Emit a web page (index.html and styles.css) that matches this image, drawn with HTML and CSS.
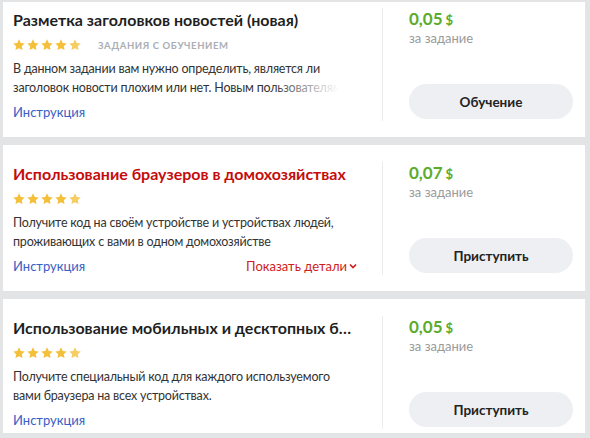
FILE: index.html
```html
<!DOCTYPE html>
<html lang="ru">
<head>
<meta charset="utf-8">
<link rel="stylesheet" href="styles.css">
</head>
<body>
<div class="frame">
  <div class="viewport">
    <div class="list">
      <div class="card">
        <div class="main">
          <div class="title">Разметка заголовков новостей (новая)</div>
          <div class="meta">
            <div class="stars">
              <svg viewBox="0 0 12 12"><path d="M6 .3l1.75 3.6 3.95.5-2.9 2.75.75 3.95L6 9.2l-3.55 1.9.75-3.95L.3 4.4l3.950-.5z"/></svg>
              <svg viewBox="0 0 12 12"><path d="M6 .3l1.75 3.6 3.95.5-2.9 2.75.75 3.95L6 9.2l-3.55 1.9.75-3.95L.3 4.4l3.95-.5z"/></svg>
              <svg viewBox="0 0 12 12"><path d="M6 .3l1.75 3.6 3.95.5-2.9 2.75.75 3.95L6 9.2l-3.55 1.9.75-3.95L.3 4.4l3.95-.5z"/></svg>
              <svg viewBox="0 0 12 12"><path d="M6 .3l1.75 3.6 3.95.5-2.9 2.75.75 3.95L6 9.2l-3.55 1.9.75-3.95L.3 4.4l3.95-.5z"/></svg>
              <svg viewBox="0 0 12 12" class="part"><path d="M6 .3l1.75 3.6 3.95.5-2.9 2.75.75 3.95L6 9.2l-3.55 1.9.75-3.95L.3 4.4l3.95-.5z"/></svg>
            </div>
            <span class="tag">Задания с обучением</span>
          </div>
          <div class="desc fade">В данном задании вам нужно определить, является ли заголовок новости плохим или нет. Новым пользователям предлагается пройти обучение.</div>
          <div class="links"><a class="link">Инструкция</a></div>
        </div>
        <div class="side">
          <div class="price">0,05<span class="cur">$</span></div>
          <div class="per">за задание</div>
          <button class="btn">Обучение</button>
        </div>
      </div>

      <div class="card">
        <div class="main">
          <div class="title red">Использование браузеров в домохозяйствах</div>
          <div class="meta">
            <div class="stars">
              <svg viewBox="0 0 12 12"><path d="M6 .3l1.75 3.6 3.95.5-2.9 2.75.75 3.95L6 9.2l-3.55 1.9.75-3.95L.3 4.4l3.95-.5z"/></svg>
              <svg viewBox="0 0 12 12"><path d="M6 .3l1.75 3.6 3.95.5-2.9 2.75.75 3.95L6 9.2l-3.55 1.9.75-3.95L.3 4.4l3.95-.5z"/></svg>
              <svg viewBox="0 0 12 12"><path d="M6 .3l1.75 3.6 3.95.5-2.9 2.75.75 3.95L6 9.2l-3.55 1.9.75-3.95L.3 4.4l3.95-.5z"/></svg>
              <svg viewBox="0 0 12 12"><path d="M6 .3l1.75 3.6 3.95.5-2.9 2.75.75 3.95L6 9.2l-3.55 1.9.75-3.95L.3 4.4l3.95-.5z"/></svg>
              <svg viewBox="0 0 12 12" class="part"><path d="M6 .3l1.75 3.6 3.95.5-2.9 2.75.75 3.95L6 9.2l-3.55 1.9.75-3.95L.3 4.4l3.95-.5z"/></svg>
            </div>
          </div>
          <div class="desc">Получите код на своём устройстве и устройствах людей, проживающих с вами в одном домохозяйстве</div>
          <div class="links">
            <a class="link">Инструкция</a>
            <a class="more">Показать детали<svg viewBox="0 0 8 6"><path d="M1 1.5l3 3 3-3" fill="none" stroke="currentColor" stroke-width="1.6"/></svg></a>
          </div>
        </div>
        <div class="side">
          <div class="price">0,07<span class="cur">$</span></div>
          <div class="per">за задание</div>
          <button class="btn">Приступить</button>
        </div>
      </div>

      <div class="card">
        <div class="main">
          <div class="title">Использование мобильных и десктопных браузеров</div>
          <div class="meta">
            <div class="stars">
              <svg viewBox="0 0 12 12"><path d="M6 .3l1.75 3.6 3.95.5-2.9 2.75.75 3.95L6 9.2l-3.55 1.9.75-3.95L.3 4.4l3.95-.5z"/></svg>
              <svg viewBox="0 0 12 12"><path d="M6 .3l1.75 3.6 3.95.5-2.9 2.75.75 3.95L6 9.2l-3.55 1.9.75-3.95L.3 4.4l3.95-.5z"/></svg>
              <svg viewBox="0 0 12 12"><path d="M6 .3l1.75 3.6 3.95.5-2.9 2.75.75 3.95L6 9.2l-3.55 1.9.75-3.95L.3 4.4l3.95-.5z"/></svg>
              <svg viewBox="0 0 12 12"><path d="M6 .3l1.75 3.6 3.95.5-2.9 2.75.75 3.95L6 9.2l-3.55 1.9.75-3.95L.3 4.4l3.95-.5z"/></svg>
              <svg viewBox="0 0 12 12" class="part"><path d="M6 .3l1.75 3.6 3.95.5-2.9 2.75.75 3.95L6 9.2l-3.55 1.9.75-3.95L.3 4.4l3.95-.5z"/></svg>
            </div>
          </div>
          <div class="desc">Получите специальный код для каждого используемого вами браузера на всех устройствах.</div>
          <div class="links"><a class="link">Инструкция</a></div>
        </div>
        <div class="side">
          <div class="price">0,05<span class="cur">$</span></div>
          <div class="per">за задание</div>
          <button class="btn">Приступить</button>
        </div>
      </div>
    </div>
  </div>
</div>
</body>
</html>
```
FILE: styles.css
```css
* { box-sizing: border-box; }
html, body { margin: 0; padding: 0; }
body {
  font-family: Lato, "Open Sans", sans-serif;
  color: #222;
  background: #e3e4e6;
}
.frame {
  width: 590px;
  height: 438px;
  padding: 2px 5px 5px 3px;
  background: #e3e4e6;
}
.viewport {
  height: 431px;
  overflow: hidden;
}
.list {
  display: flex;
  flex-direction: column;
  gap: 8px;
  margin-top: -11px;
}
.card {
  display: flex;
  height: 146px;
  background: #fff;
  padding: 17px 12px 16px 0;
}
.main {
  width: 380px;
  flex: none;
  display: flex;
  flex-direction: column;
  padding: 0 31px 0 10px;
  border-right: 1px solid #ececec;
}
.title {
  margin-right: -6px;
  font-size: 16px;
  font-weight: 700;
  line-height: 24px;
  color: #1f1f1f;
  white-space: nowrap;
  overflow: hidden;
  text-overflow: ellipsis;
}
.title.red { color: #c50c0c; }
.meta {
  display: flex;
  align-items: center;
  gap: 17px;
  margin-top: 6px;
  height: 14px;
}
.stars { display: flex; gap: 2px; }
.stars svg { width: 12px; height: 12px; fill: #f4c03a; }
.stars svg.part { fill: #f6cd62; }
.tag {
  font-size: 9.5px;
  font-weight: 700;
  text-transform: uppercase;
  letter-spacing: 0.6px;
  color: #a9aeb4;
}
.desc {
  position: relative;
  margin-top: 7px;
  font-size: 12.5px;
  letter-spacing: -0.2px;
  line-height: 19px;
  color: #333;
  max-height: 38px;
  overflow: hidden;
}
.desc.fade::after {
  content: "";
  position: absolute;
  right: 0;
  top: 19px;
  width: 80px;
  height: 19px;
  background: linear-gradient(to right, rgba(255,255,255,0), #fff 85%);
}
.links {
  margin-top: auto;
  display: flex;
  justify-content: space-between;
  align-items: center;
  margin-right: -6px;
  font-size: 13px;
  line-height: 18px;
}
.link { color: #3760c4; }
.more { color: #d21b1b; display: flex; align-items: center; }
.more svg { width: 8px; height: 6px; margin-left: 2px; }
.side {
  flex: 1;
  display: flex;
  flex-direction: column;
  padding-left: 26px;
}
.price {
  margin-top: 1px;
  font-size: 17px;
  font-weight: 700;
  line-height: 20px;
  color: #5bac2c;
}
.cur { font-size: 13px; margin-left: 3px; }
.per {
  font-size: 13px;
  line-height: 17px;
  color: #9a9a9a;
}
.btn {
  margin-top: auto;
  margin-bottom: 2px;
  height: 35px;
  border: none;
  border-radius: 18px;
  background: #edeff2;
  font-family: inherit;
  font-size: 13.5px;
  font-weight: 700;
  color: #222;
}
```
